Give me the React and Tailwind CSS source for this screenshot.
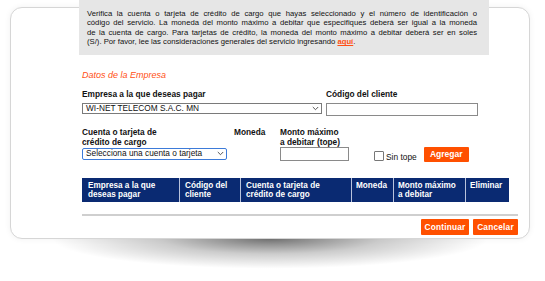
import React from "react";

const Chevron = () => (
  <svg width="7" height="5" viewBox="0 0 7 5" className="shrink-0">
    <path d="M0.8 1 L3.5 3.7 L6.2 1" fill="none" stroke="#444" strokeWidth="0.9" />
  </svg>
);

const Line = ({ children, last }) => (
  <div
    className={
      "whitespace-nowrap " +
      (last ? "text-left" : "text-justify [text-align-last:justify]")
    }
  >
    {children}
  </div>
);

export default function App() {
  return (
    <div
      className="w-[545px] h-[281px] bg-white overflow-hidden pt-[7px] pl-[10px] text-[#111]"
      style={{ fontFamily: '"Liberation Sans", Arial, sans-serif' }}
    >
      <div className="w-[520px] h-[232px] border border-[#d6d6d6] rounded-[12px] bg-white shadow-[0_0_6px_rgba(0,0,0,0.06)] pl-[71px]">
        {/* Info box */}
        <div className="-mt-[8px] -ml-[3px] w-[410px] bg-[#e6e6e6] pl-[8px] pt-[9px] pb-[8px] text-[7.7px] leading-[9.4px] text-[#111]">
          <div className="w-[390px]">
            <Line>
              Verifica la cuenta o tarjeta de crédito de cargo que hayas seleccionado y el número de identificación o
            </Line>
            <Line>
              código del servicio. La moneda del monto máximo a debitar que especifiques deberá ser igual a la moneda
            </Line>
            <Line>
              de la cuenta de cargo. Para tarjetas de crédito, la moneda del monto máximo a debitar deberá ser en soles
            </Line>
            <Line last>
              (S/). Por favor, lee las consideraciones generales del servicio ingresando{" "}
              <span className="text-[#ff4f14] underline font-bold">aquí</span>.
            </Line>
          </div>
        </div>

        {/* Datos de la Empresa */}
        <div className="mt-[15.5px] text-[9px] leading-[11px] italic text-[#ff4f14]">
          Datos de la Empresa
        </div>

        {/* Row 1 */}
        <div className="mt-[8px] flex">
          <div className="w-[240px]">
            <div className="text-[8.3px] leading-[10px] font-bold">Empresa a la que deseas pagar</div>
            <div className="mt-[3.5px] h-[11.5px] border border-[#7a7a7a] flex items-center justify-between pl-[3px] pr-[2px]">
              <span className="text-[8.3px] leading-[9px]">WI-NET TELECOM S.A.C. MN</span>
              <Chevron />
            </div>
          </div>
          <div className="ml-[4px] w-[152px]">
            <div className="text-[8.3px] leading-[10px] font-bold">Código del cliente</div>
            <div className="mt-[4px] h-[13px] border border-[#8a8a8a] bg-white" />
          </div>
        </div>

        {/* Row 2 */}
        <div className="mt-[12px] flex items-start">
          <div className="w-[145px]">
            <div className="text-[8.3px] leading-[9.7px] font-bold">
              Cuenta o tarjeta de
              <br />
              crédito de cargo
            </div>
            <div className="mt-[0.5px] h-[11.5px] border border-[#3d7bd9] rounded-[2px] flex items-center justify-between pl-[3px] pr-[2px]">
              <span className="text-[8.3px] leading-[9px]">Selecciona una cuenta o tarjeta</span>
              <Chevron />
            </div>
          </div>
          <div className="ml-[7px] w-[46px] text-[8.3px] leading-[9.7px] font-bold">Moneda</div>
          <div className="w-[69px]">
            <div className="text-[8.3px] leading-[9.7px] font-bold">
              Monto máximo
              <br />
              a debitar (tope)
            </div>
            <div className="-mt-[0.5px] h-[13.5px] border border-[#8a8a8a] bg-white" />
          </div>
          <div className="ml-[25px] mt-[21.5px] flex items-center">
            <div className="w-[10px] h-[10px] border border-[#777] rounded-[1px] bg-white" />
            <span className="ml-[2px] text-[8.4px] leading-[10px] mt-[2px]">Sin tope</span>
          </div>
          <div className="ml-[7px] mt-[19px] w-[45px] h-[15px] bg-[#ff5000] rounded-[1px] flex items-center justify-center text-white text-[8.5px] font-bold">
            Agregar
          </div>
        </div>

        {/* Table header */}
        <div className="mt-[15.5px] w-[427px] h-[24.5px] bg-[#0a2a72] flex text-white text-[8.2px] leading-[9px] font-bold">
          <div className="w-[97px] pl-[6px] pt-[3px]">
            Empresa a la que
            <br />
            deseas pagar
          </div>
          <div className="w-[61px] pl-[5px] pt-[3px] border-l border-[#b9c3dc]">
            Código del
            <br />
            cliente
          </div>
          <div className="w-[111px] pl-[5px] pt-[3px] border-l border-[#b9c3dc]">
            Cuenta o tarjeta de
            <br />
            crédito de cargo
          </div>
          <div className="w-[42px] pl-[4px] pt-[3px] border-l border-[#b9c3dc]">Moneda</div>
          <div className="w-[72px] pl-[4px] pt-[3px] border-l border-[#b9c3dc]">
            Monto máximo
            <br />
            a debitar
          </div>
          <div className="w-[44px] pl-[4px] pt-[3px] border-l border-[#b9c3dc]">Eliminar</div>
        </div>

        {/* Divider */}
        <div className="mt-[11.5px] w-[436px] h-[2px] bg-[#cfcfcf]" />

        {/* Buttons */}
        <div className="mt-[3.5px] w-[436px] flex justify-end gap-[4px]">
          <div className="w-[48px] h-[16px] bg-[#ff5000] rounded-[1px] flex items-center justify-center text-white text-[8.3px] font-bold tracking-[0.2px]">
            Continuar
          </div>
          <div className="w-[45px] h-[16px] bg-[#ff5000] rounded-[1px] flex items-center justify-center text-white text-[8.3px] font-bold tracking-[0.2px]">
            Cancelar
          </div>
        </div>
      </div>

      {/* Drop shadow beneath card */}
      <div className="ml-[40px] w-[440px] h-[30px] bg-[radial-gradient(ellipse_at_top,rgba(0,0,0,0.55)_0%,rgba(0,0,0,0.2)_35%,rgba(0,0,0,0)_70%)]" />
    </div>
  );
}
